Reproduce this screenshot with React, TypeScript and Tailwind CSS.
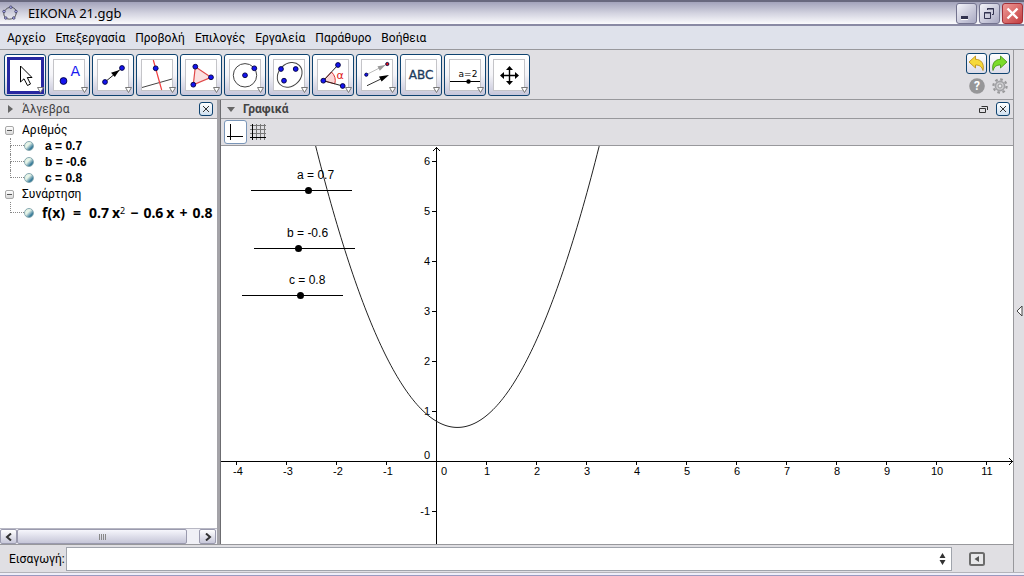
import { useEffect, useRef, useState } from "react";
import type { ReactNode } from "react";

const MENUS = ["Αρχείο", "Επεξεργασία", "Προβολή", "Επιλογές", "Εργαλεία", "Παράθυρο", "Βοήθεια"];

const ORIGIN_X = 215;
const ORIGIN_Y = 315;
const UNIT = 50;

function Dot({ x, y, r = 2.4, fill = "#1414f0" }: { x: number; y: number; r?: number; fill?: string }) {
  return <circle cx={x} cy={y} r={r} fill={fill} stroke="#000040" strokeWidth="0.9" />;
}

type Tool = { name: string; art: ReactNode };

const TOOLS: Tool[] = [
  {
    name: "Μετακίνηση",
    art: (
      <path
        d="M16.5 12V28L20 24.8L23.5 31.5L26.5 30L23.3 23.5H28Z"
        fill="#fff"
        stroke="#000"
        strokeWidth="1"
      />
    ),
  },
  {
    name: "Νέο σημείο",
    art: (
      <>
        <Dot x={15.5} y={27} r={3.4} />
        <text x="22.5" y="22" fontSize="14" fill="#1818f0">A</text>
      </>
    ),
  },
  {
    name: "Διάνυσμα",
    art: (
      <>
        <path d="M13 28L30 14" stroke="#222" />
        <path d="M27.5 16L22.8 23L19 18.8Z" fill="#000" />
        <Dot x={13} y={28} />
        <Dot x={30} y={14} />
      </>
    ),
  },
  {
    name: "Κάθετη ευθεία",
    art: (
      <>
        <path d="M6 33.5L36 25" stroke="#444" />
        <path d="M17.3 6L25.7 36" stroke="#f04040" strokeWidth="1.2" />
        <Dot x={19.7} y={14.3} />
      </>
    ),
  },
  {
    name: "Πολύγωνο",
    art: (
      <>
        <path d="M15.3 12.7L31 23.3L13.3 30.7Z" fill="#fbe0e0" stroke="#e04848" strokeWidth="1.2" />
        <Dot x={15.3} y={12.7} />
        <Dot x={31} y={23.3} />
        <Dot x={13.3} y={30.7} />
      </>
    ),
  },
  {
    name: "Κύκλος",
    art: (
      <>
        <circle cx="21" cy="21.3" r="11.7" fill="none" stroke="#444" />
        <Dot x={21} y={21.3} />
        <Dot x={30.3} y={14.3} />
      </>
    ),
  },
  {
    name: "Έλλειψη",
    art: (
      <>
        <ellipse cx="21.7" cy="20.9" rx="13.6" ry="11" transform="rotate(-45 21.7 20.9)" fill="none" stroke="#444" />
        <Dot x={13} y={15} />
        <Dot x={27.7} y={15} />
        <Dot x={16} y={26.7} />
      </>
    ),
  },
  {
    name: "Γωνία",
    art: (
      <>
        <path d="M11.3 26.7L19.5 18A12 12 0 0 1 22.8 29.8Z" fill="#fbd8d8" stroke="#e03030" />
        <path d="M26 11L11.3 26.7L30.7 32" fill="none" stroke="#222" />
        <text x="24.5" y="25" fontSize="11" fill="#e01818">α</text>
        <Dot x={26} y={11} />
        <Dot x={11.3} y={26.7} />
        <Dot x={30.7} y={32} />
      </>
    ),
  },
  {
    name: "Μεταφορά",
    art: (
      <>
        <path d="M10.3 20.7L31.3 10" stroke="#bbb" />
        <path d="M29.5 11L21.5 12.2L23.8 16.8Z" fill="#999" />
        <path d="M11 31.7L28 23.5" stroke="#333" />
        <path d="M33 21L23 22.6L25.6 27.6Z" fill="#000" />
        <Dot x={10.3} y={20.7} r={1.6} />
        <Dot x={31.3} y={10} r={1.6} fill="#e81010" />
      </>
    ),
  },
  {
    name: "Κείμενο",
    art: (
      <text x="21" y="25" fontSize="12" textAnchor="middle" fill="#1c3a5c" stroke="#1c3a5c" strokeWidth="0.3">
        ABC
      </text>
    ),
  },
  {
    name: "Δρομέας",
    art: (
      <>
        <text x="24" y="23" fontSize="9" textAnchor="middle" fill="#000">a=2</text>
        <path d="M6 27.5H36" stroke="#000" />
        <circle cx="24.5" cy="27.5" r="2.2" />
      </>
    ),
  },
  {
    name: "Μετακίνηση γραφικών",
    art: (
      <>
        <path d="M21.5 14V29M14 21.5H29" stroke="#000" strokeWidth="1.4" />
        <path d="M21.5 12L25 16H18ZM21.5 31L25 27H18ZM12 21.5L16 18V25ZM31 21.5L27 18V25Z" />
      </>
    ),
  },
];

function TitleBar() {
  return (
    <header className="flex h-[26px] shrink-0 items-center border-t-2 border-b-2 border-t-[#68687e] border-b-[#8a8aa4] bg-linear-to-b from-[#a3a3bb] via-[#d2d2df] to-[#fbfbfd] pl-[2px] pr-px">
      <svg viewBox="0 0 16 16" className="h-4 w-4" aria-hidden="true">
        <path d="M2 6.5C4 3.5 7 2 9.5 2.2C12.5 3 14.5 5 14.5 7C14 10 13 12 12 13C9 14.5 5.5 14.5 3.5 13C1.8 11 1.6 9 2 6.5Z" fill="none" stroke="#444" strokeWidth="0.9" />
        {[[2, 6.5], [8.8, 2.2], [14, 6.5], [11.8, 13], [3.8, 13]].map(([x, y]) => (
          <circle key={`${x}-${y}`} cx={x} cy={y} r="1.3" fill="#a9a9ee" stroke="#333355" strokeWidth="0.7" />
        ))}
      </svg>
      <h1 className="ml-[10px] flex-1 font-['Noto_Sans',sans-serif] text-[13px] leading-4">EIKONA 21.ggb</h1>
      <div className="flex gap-[2px]">
        <button aria-label="Ελαχιστοποίηση" className="h-[21px] w-[21px] rounded-[3px] border border-[#73738f] bg-linear-to-br from-[#f4f4fa] to-[#a9a9c2]">
          <svg viewBox="0 0 19 19" className="block h-[19px] w-[19px]"><path d="M4 13H11V16H4Z" fill="#fff" /><path d="M4 12H11V15H4Z" fill="#333350" /></svg>
        </button>
        <button aria-label="Επαναφορά" className="h-[21px] w-[21px] rounded-[3px] border border-[#73738f] bg-linear-to-br from-[#f4f4fa] to-[#a9a9c2]">
          <svg viewBox="0 0 19 19" className="block h-[19px] w-[19px]" fill="none" stroke="#333350">
            <path d="M7.5 6V4.5H13.5V10.5H12M7 5H14" />
            <path d="M4.5 8.5H10.5V14.5H4.5ZM4 9H11" />
          </svg>
        </button>
        <button aria-label="Κλείσιμο" className="h-[21px] w-[21px] rounded-[3px] border border-[#a03038] bg-linear-to-br from-[#ee9a98] to-[#c23a40]">
          <svg viewBox="0 0 19 19" className="block h-[19px] w-[19px]"><path d="M4.5 4.5L14.5 14.5M14.5 4.5L4.5 14.5" stroke="#fff" strokeWidth="2.4" /></svg>
        </button>
      </div>
    </header>
  );
}

function MenuBar() {
  return (
    <nav className="flex h-6 shrink-0 items-center gap-[10px] border-b border-[#98989c] bg-[#dfe2eb] pl-[7px]">
      {MENUS.map((m) => (
        <button key={m} className="text-[12px] leading-4">{m}</button>
      ))}
    </nav>
  );
}

function Toolbar() {
  const [active, setActive] = useState(0);
  return (
    <div className="flex h-[50px] shrink-0 items-start border-b border-[#98989c] pt-1 pl-1">
      <div className="flex flex-1 gap-[2px]">
        {TOOLS.map((t, i) => (
          <button
            key={t.name}
            aria-label={t.name}
            aria-pressed={active === i}
            onClick={() => setActive(i)}
            className="h-[42px] w-[42px] rounded-[3px] border border-[#0f4370] bg-linear-to-b from-white via-[#f4f4f8] to-[#c6c6da]"
          >
            <svg viewBox="1 1 40 40" className="block h-10 w-10 font-['DejaVu_Sans',sans-serif]">
              {active === i ? (
                <rect x="4.5" y="4.5" width="34" height="34" fill="#fff" stroke="#2828a0" strokeWidth="3" />
              ) : (
                <rect x="5.5" y="5.5" width="31" height="31" fill="#fff" stroke="#c4c4c8" />
              )}
              {t.art}
              <path d="M33.5 33.5H39.5L36.5 38.5Z" fill="#fff" stroke="#777" />
            </svg>
          </button>
        ))}
      </div>
      <div className="-mt-px grid grid-cols-2 gap-x-[2px] gap-y-[3px] pr-[3px]">
        <button aria-label="Αναίρεση" className="h-[21px] w-[21px] rounded-[3px] border border-[#0f4370] bg-linear-to-b from-white to-[#dcdce8]">
          <svg viewBox="0 0 19 19" className="block h-[19px] w-[19px]">
            <path d="M2 8L8.5 2V5.3C14 5.3 17.5 9.5 16 16.5C14.8 12.5 12.5 11 8.5 11V14Z" fill="#f6d93a" stroke="#b8860b" strokeWidth="0.8" />
          </svg>
        </button>
        <button aria-label="Επανάληψη" className="h-[21px] w-[21px] rounded-[3px] border border-[#0f4370] bg-linear-to-b from-white to-[#dcdce8]">
          <svg viewBox="0 0 19 19" className="block h-[19px] w-[19px]">
            <path d="M17 8L10.5 2V5.3C5 5.3 1.5 9.5 3 16.5C4.2 12.5 6.5 11 10.5 11V14Z" fill="#7bdc2a" stroke="#3f8a10" strokeWidth="0.8" />
          </svg>
        </button>
        <button aria-label="Βοήθεια" className="flex h-[18px] items-center justify-center">
          <svg viewBox="0 0 16 16" className="h-4 w-4">
            <circle cx="8" cy="8" r="7.8" fill="#969698" />
            <text x="8" y="12.2" fontSize="12" fontWeight="700" textAnchor="middle" fill="#fff">?</text>
          </svg>
        </button>
        <button aria-label="Ρυθμίσεις" className="flex h-[18px] items-center justify-center">
          <svg viewBox="0 0 16 16" className="h-4 w-4" fill="none">
            <circle cx="8" cy="8" r="6.6" stroke="#98989a" strokeWidth="2.2" strokeDasharray="2.6 2.58" />
            <circle cx="8" cy="8" r="4.6" fill="#cdcdcf" stroke="#a2a2a6" strokeWidth="1.6" />
            <circle cx="8" cy="8" r="2" fill="#e8e8ea" stroke="#9a9a9e" />
          </svg>
        </button>
      </div>
    </div>
  );
}

function CloseButton({ label }: { label: string }) {
  return (
    <button aria-label={label} className="h-[14px] w-[14px] rounded-[3px] border border-[#0f4370] bg-linear-to-b from-white to-[#cfe0f0]">
      <svg viewBox="0 0 12 12" className="block h-3 w-3"><path d="M3 3L9 9M9 3L3 9" stroke="#333" /></svg>
    </button>
  );
}

function Marble() {
  return <span className="h-[10px] w-[10px] shrink-0 rounded-full border border-[#86a8b0] bg-linear-135 from-[#e6f4e8] from-40% to-[#3d7f9c] to-75%" />;
}

function Group({ title, children }: { title: string; children: ReactNode }) {
  return (
    <li>
      <div className="flex h-4 items-center">
        <button aria-label={title} className="flex h-[9px] w-[9px] items-center justify-center rounded-[2px] border border-[#a8a8a8] bg-linear-to-b from-white to-[#d8d8d8]">
          <span className="h-px w-[5px] bg-[#555]" />
        </button>
        <span className="ml-2 text-[12px] leading-4">{title}</span>
      </div>
      <ul>{children}</ul>
    </li>
  );
}

function Leaf({ last = false, tall = false, children }: { last?: boolean; tall?: boolean; children: ReactNode }) {
  return (
    <li className={tall ? "flex h-[22px] items-center" : "flex h-4 items-center"}>
      <span className="ml-[5px] flex h-full w-[14px] shrink-0 flex-col">
        <span className="h-1/2 border-b border-l border-dotted border-[#888]" />
        <span className={last ? "h-1/2" : "h-1/2 border-l border-dotted border-[#888]"} />
      </span>
      <Marble />
      {children}
    </li>
  );
}

function AlgebraPanel({ a, b, c }: { a: number; b: number; c: number }) {
  return (
    <section className="flex w-[217px] shrink-0 flex-col bg-white">
      <div className="flex h-[19px] items-center border-b border-[#98989c] bg-[#e0dfe3] pr-1 pl-2">
        <svg viewBox="0 0 5 8" className="h-2 w-[5px]"><path d="M0 0L5 4L0 8Z" fill="#666" /></svg>
        <h2 className="ml-[9px] flex-1 text-[12px] leading-4 text-[#444]">Άλγεβρα</h2>
        <CloseButton label="Κλείσιμο άλγεβρας" />
      </div>
      <ul className="flex-1 overflow-hidden pt-[3px] pl-[5px]">
        <Group title="Αριθμός">
          {[["a", a], ["b", b], ["c", c]].map(([n, v]) => (
            <Leaf key={n} last={n === "c"}>
              <span className="ml-[11px] font-['Liberation_Sans',sans-serif] text-[12px] leading-4 font-bold">{n} = {v}</span>
            </Leaf>
          ))}
        </Group>
        <Group title="Συνάρτηση">
          <Leaf last tall>
            <span className="ml-2 flex items-baseline gap-[5px] font-['Noto_Sans',sans-serif] text-[14px] leading-4 font-bold whitespace-nowrap">
              <span>f(x)</span><span className="px-[3px]">=</span>
              <span className="flex gap-[3px]"><span>{a}</span><span>x<sup className="text-[9px] font-normal">2</sup></span></span>
              <span>{b < 0 ? "−" : "+"}</span>
              <span className="flex gap-[3px]"><span>{Math.abs(b)}</span><span>x</span></span>
              <span>{c < 0 ? "−" : "+"}</span><span>{Math.abs(c)}</span>
            </span>
          </Leaf>
        </Group>
      </ul>
      <div className="flex h-4 border-t border-[#b8b8c4] bg-[#f0f0f6]">
        <button aria-label="Αριστερά" className="flex w-[17px] items-center justify-center rounded-[2px] border border-[#9a9aae] bg-linear-to-b from-white to-[#c8c8da]">
          <svg viewBox="0 0 8 8" className="h-2 w-2"><path d="M6 0.5L2 4L6 7.5" fill="none" stroke="#333" strokeWidth="2" /></svg>
        </button>
        <div className="flex flex-1">
          <div className="mr-3 flex flex-1 items-center justify-center gap-px rounded-[2px] border border-[#9a9aae] bg-linear-to-b from-[#f6f6fc] to-[#c6c6d8]">
            <span className="h-[6px] w-px bg-[#888]" />
            <span className="h-[6px] w-px bg-[#888]" />
            <span className="h-[6px] w-px bg-[#888]" />
            <span className="h-[6px] w-px bg-[#888]" />
          </div>
        </div>
        <button aria-label="Δεξιά" className="mr-px flex w-[17px] items-center justify-center rounded-[2px] border border-[#9a9aae] bg-linear-to-b from-white to-[#c8c8da]">
          <svg viewBox="0 0 8 8" className="h-2 w-2"><path d="M2 0.5L6 4L2 7.5" fill="none" stroke="#333" strokeWidth="2" /></svg>
        </button>
      </div>
    </section>
  );
}

function parabola(a: number, b: number, c: number, width: number) {
  const pts: string[] = [];
  for (let px = 0; px <= width; px += 2) {
    const x = (px - ORIGIN_X) / UNIT;
    const y = a * x * x + b * x + c;
    if (Math.abs(y) < 60) pts.push(`${px},${(ORIGIN_Y - y * UNIT).toFixed(2)}`);
  }
  return pts.join(" ");
}

function range(from: number, to: number) {
  return Array.from({ length: to - from + 1 }, (_, i) => from + i).filter((n) => n !== 0);
}

function Plot({ a, b, c }: { a: number; b: number; c: number }) {
  const ref = useRef<SVGSVGElement>(null);
  const [size, setSize] = useState({ width: 600, height: 380 });
  useEffect(() => {
    const el = ref.current;
    if (!el) return;
    const measure = () => {
      const box = el.getBoundingClientRect();
      setSize({ width: box.width, height: box.height });
    };
    measure();
    const observer = new ResizeObserver(measure);
    observer.observe(el);
    return () => observer.disconnect();
  }, []);
  const xs = range(-4, Math.floor((size.width - 10 - ORIGIN_X) / UNIT));
  const ys = range(-Math.max(0, Math.floor((size.height - 8 - ORIGIN_Y) / UNIT)), 6);
  return (
    <svg ref={ref} className="block h-full w-full font-['Liberation_Sans',sans-serif] text-[11px]">
      <g shapeRendering="crispEdges" fill="#000">
        <rect x="0" y={ORIGIN_Y} width="100%" height="1" />
        <rect x={ORIGIN_X} y="1" width="1" height="100%" />
        {xs.map((n) => <rect key={n} x={ORIGIN_X + n * UNIT} y={ORIGIN_Y} width="1" height="4" />)}
        {ys.map((n) => <rect key={n} x={ORIGIN_X - 4} y={ORIGIN_Y - n * UNIT} width="4" height="1" />)}
      </g>
      <path d="M212 5L215.5 1.5L219 5" fill="none" stroke="#000" />
      <svg x="100%" overflow="visible"><path d="M-4 312L-0.5 315.5L-4 319" fill="none" stroke="#000" /></svg>
      {xs.map((n) => (
        <text key={n} x={ORIGIN_X + n * UNIT + (n < 0 ? 2 : 1)} y={ORIGIN_Y + 14} textAnchor="middle">{n}</text>
      ))}
      {ys.map((n) => (
        <text key={n} x={ORIGIN_X - 6} y={ORIGIN_Y - n * UNIT + 4} textAnchor="end">{n}</text>
      ))}
      <text x={ORIGIN_X + 5} y={ORIGIN_Y + 14}>0</text>
      <text x={ORIGIN_X - 6} y={ORIGIN_Y - 2} textAnchor="end">0</text>
      <polyline points={parabola(a, b, c, size.width)} fill="none" stroke="#222" />
    </svg>
  );
}

function Slider({ name, value, onChange, place, indent }: { name: string; value: number; onChange: (v: number) => void; place: string; indent: string }) {
  return (
    <div className={`absolute flex w-[109px] flex-col ${place}`}>
      <label htmlFor={`slider-${name}`} className={`font-['Liberation_Sans',sans-serif] text-[12px] leading-4 ${indent}`}>{name} = {value}</label>
      <input
        id={`slider-${name}`}
        type="range"
        min={-5}
        max={5}
        step={0.1}
        value={value}
        onChange={(e) => onChange(Number(e.target.value))}
        className="m-0 mt-1 h-[7px] w-full appearance-none bg-[linear-gradient(#000,#000)] bg-[length:101px_1px] bg-center bg-no-repeat [&::-webkit-slider-thumb]:h-[7px] [&::-webkit-slider-thumb]:w-[7px] [&::-webkit-slider-thumb]:appearance-none [&::-webkit-slider-thumb]:rounded-full [&::-webkit-slider-thumb]:bg-black"
      />
    </div>
  );
}

export default function App() {
  const [a, setA] = useState(0.7);
  const [b, setB] = useState(-0.6);
  const [c, setC] = useState(0.8);
  return (
    <div className="flex h-screen flex-col overflow-hidden bg-[#e0dfe3] font-[Roboto,sans-serif] text-black">
      <TitleBar />
      <MenuBar />
      <div className="flex min-h-0 flex-1">
        <div className="flex min-w-0 flex-1 flex-col">
          <Toolbar />
          <main className="flex min-h-0 flex-1">
            <AlgebraPanel a={a} b={b} c={c} />
            <div className="w-1 shrink-0 border-r border-[#6c6c70] bg-[#a4a3a8]" />
            <section className="flex min-w-0 flex-1 flex-col">
              <div className="flex h-[19px] shrink-0 items-center border-b border-[#98989c] pr-[3px] pl-[6px]">
                <svg viewBox="0 0 8 5" className="h-[5px] w-2"><path d="M0 0H8L4 5Z" fill="#666" /></svg>
                <h2 className="ml-2 flex-1 text-[12px] leading-4 font-bold text-[#444]">Γραφικά</h2>
                <button aria-label="Νέο παράθυρο" className="mr-2">
                  <svg viewBox="0 0 9 7" className="block h-[7px] w-[9px]" fill="none" stroke="#333"><path d="M0.5 2.5H6.5V6.5H0.5ZM2.5 0.5H8.5V4" /></svg>
                </button>
                <CloseButton label="Κλείσιμο γραφικών" />
              </div>
              <div className="flex h-[27px] shrink-0 items-center gap-[3px] border-b border-[#98989c] pl-[3px]">
                <button aria-label="Άξονες" className="h-6 w-[23px] rounded-[3px] border border-[#7a96b8] bg-white">
                  <svg viewBox="0 0 21 22" className="block h-[22px] w-[21px]"><path d="M5.5 3V19M2 15.5H18" stroke="#000" /></svg>
                </button>
                <button aria-label="Πλέγμα">
                  <svg viewBox="0 0 16 16" className="block h-4 w-4" fill="none">
                    <path d="M6.5 0V16M10.5 0V16M14.5 0V16M0 1.5H16M0 5.5H16M0 9.5H16" stroke="#777" />
                    <path d="M2.5 0V16M0 13.5H16" stroke="#000" />
                  </svg>
                </button>
              </div>
              <div className="relative min-h-0 flex-1 overflow-hidden bg-white">
                <Plot a={a} b={b} c={c} />
                <Slider name="a" value={a} onChange={setA} place="top-[21px] left-[26px]" indent="pl-[50px]" />
                <Slider name="b" value={b} onChange={setB} place="top-[79px] left-[29px]" indent="pl-[37px]" />
                <Slider name="c" value={c} onChange={setC} place="top-[126px] left-[17px]" indent="pl-[51px]" />
              </div>
            </section>
          </main>
          <form className="flex h-7 shrink-0 items-center border-t border-[#98989c] pl-[9px]" onSubmit={(e) => e.preventDefault()}>
            <label htmlFor="command" className="text-[12px] leading-4">Εισαγωγή:</label>
            <div className="ml-px flex h-6 flex-1 items-center border border-[#a0a4ac] bg-white pr-[5px]">
              <input id="command" type="text" className="h-full min-w-0 flex-1 px-1 text-[12px] outline-none" />
              <button type="button" aria-label="Ιστορικό">
                <svg viewBox="0 0 7 12" className="block h-3 w-[7px]"><path d="M3.5 0L6.5 5H0.5ZM3.5 12L6.5 7H0.5Z" fill="#333" /></svg>
              </button>
            </div>
            <button type="button" aria-label="Βοήθεια εισαγωγής" className="mr-7 ml-[17px]">
              <svg viewBox="0 0 16 14" className="block h-[14px] w-4">
                <rect x="1" y="1" width="14" height="12" rx="1.5" fill="#e8e8ea" stroke="#6c6c6c" strokeWidth="2" />
                <path d="M10 4V10L5.5 7Z" fill="#555" />
              </svg>
            </button>
          </form>
        </div>
        <aside className="flex w-[11px] shrink-0 items-center border-l border-[#98989c] pl-[2px]">
          <button aria-label="Πλαϊνή μπάρα">
            <svg viewBox="0 0 7 12" className="block h-3 w-[7px]"><path d="M6 1V11L1 6Z" fill="#fff" stroke="#444" /></svg>
          </button>
        </aside>
      </div>
      <footer className="h-1 shrink-0 border-t border-b border-t-[#b4b4ba] border-b-[#9a9ac0] bg-[#eeeef8]" />
    </div>
  );
}
